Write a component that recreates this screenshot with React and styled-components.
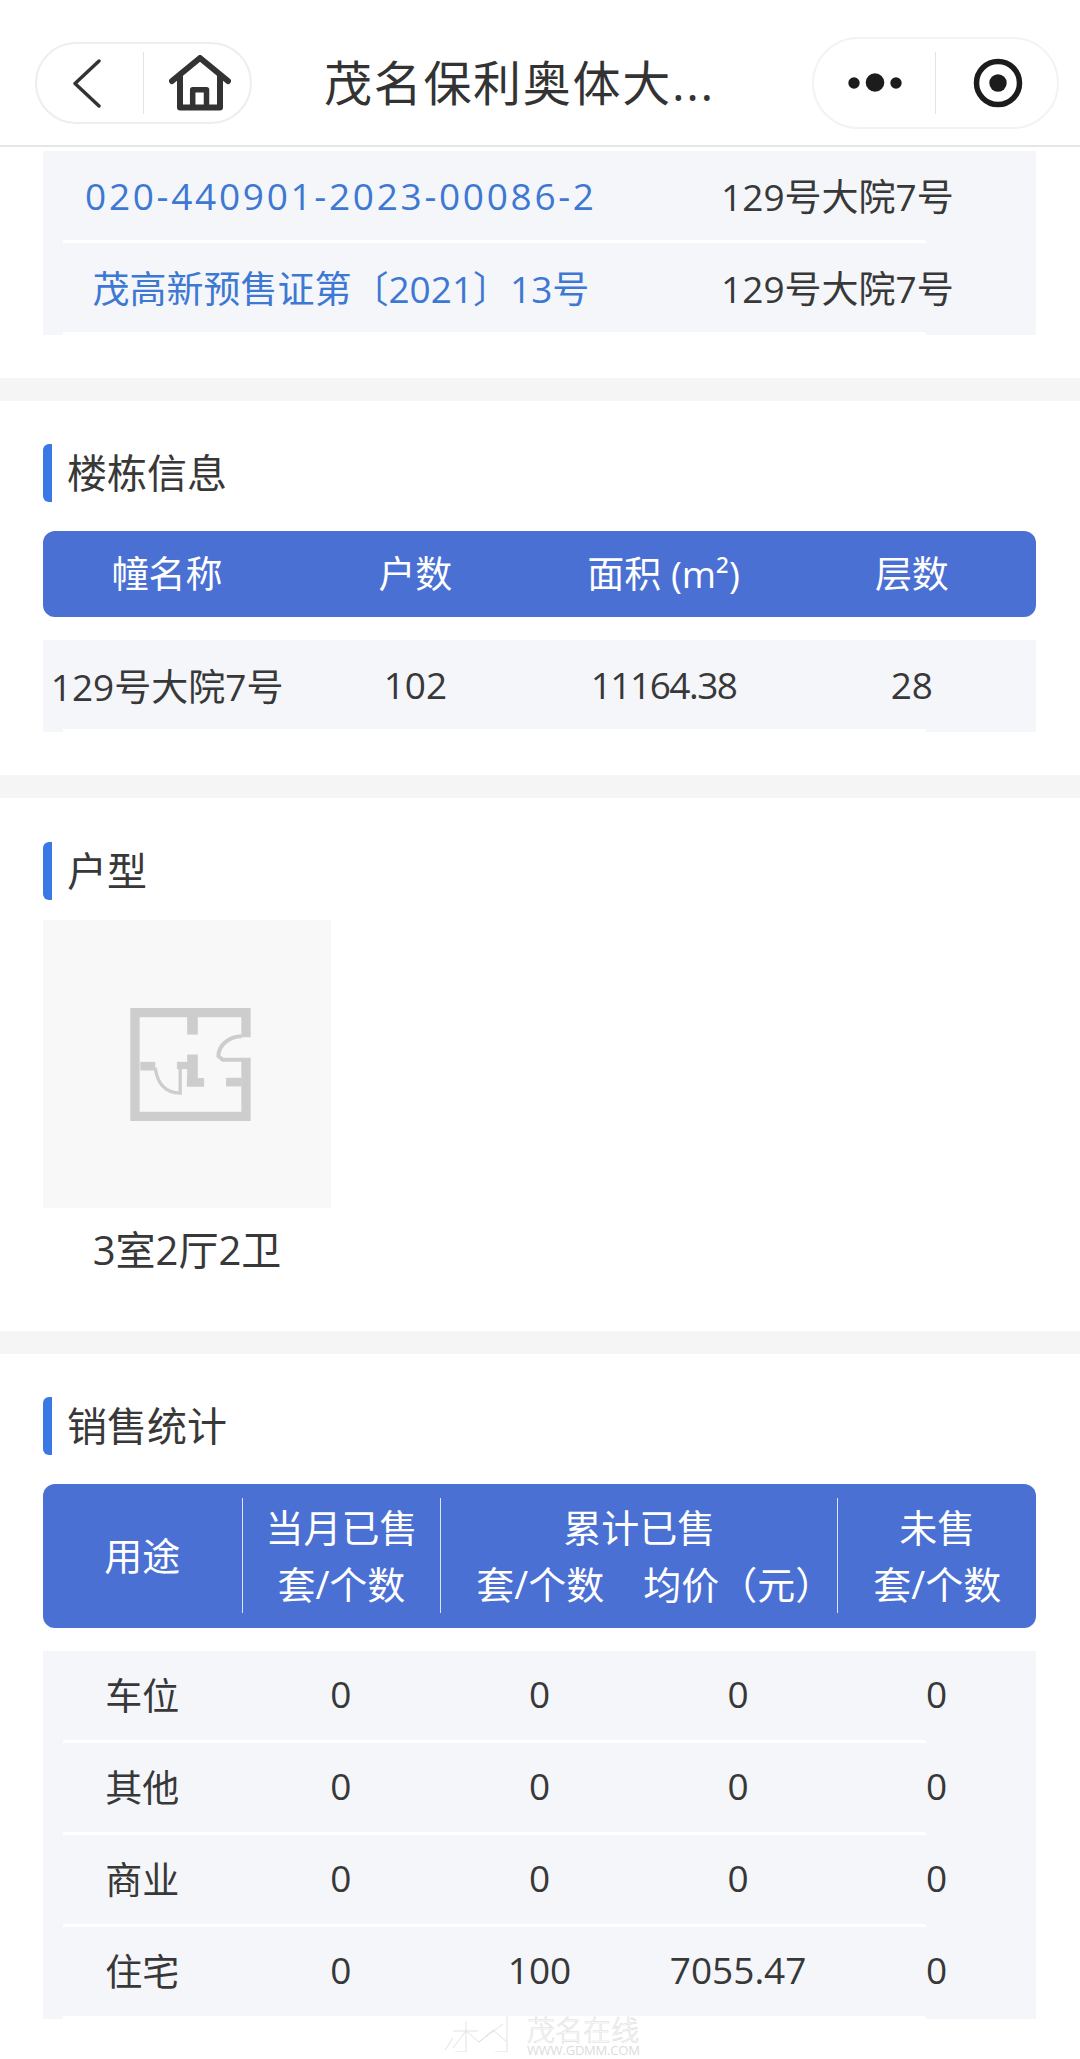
import styled, { createGlobalStyle } from "styled-components";

const GlobalStyle = createGlobalStyle`
  body {
    margin: 0;
    background: #fff;
    font-family: "Open Sans", "Noto Sans CJK SC", sans-serif;
    color: #383838;
  }
`;

const permits = [
  { code: "020-440901-2023-00086-2", spaced: true, name: "129号大院7号" },
  { code: "茂高新预售证第〔2021〕13号", name: "129号大院7号" },
];
const sales = [
  ["车位", "0", "0", "0", "0"],
  ["其他", "0", "0", "0", "0"],
  ["商业", "0", "0", "0", "0"],
  ["住宅", "0", "100", "7055.47", "0"],
];

export default function App() {
  return (
    <Page>
      <GlobalStyle />
      <NavBar>
        <BackCapsule>
          <CapsuleCell $right="6px">
            <svg width="30" height="50" viewBox="0 0 30 50" fill="none" stroke="#333" strokeWidth="3.4" strokeLinecap="round" strokeLinejoin="round">
              <path d="M27 3 L3 25.5 L27 48" />
            </svg>
          </CapsuleCell>
          <CapsuleCell $divided $left="6px">
            <svg width="62" height="56" viewBox="0 0 62 56" fill="none" stroke="#333" strokeWidth="6" strokeLinecap="round" strokeLinejoin="round">
              <path d="M3 26 L31 3 L59 26" />
              <path d="M11 22 V52.5 H51 V22" />
              <path d="M23.7 52 V34.7 H37.5 V52" strokeWidth="5.5" />
            </svg>
          </CapsuleCell>
        </BackCapsule>
        <Title>茂名保利奥体大...</Title>
        <MenuCapsule>
          <CapsuleCell $left="2px">
            <svg width="56" height="20" viewBox="0 0 56 20" fill="#1c1c1c">
              <circle cx="6" cy="10" r="5.7" />
              <circle cx="27" cy="9.5" r="9.3" />
              <circle cx="48" cy="10" r="5.7" />
            </svg>
          </CapsuleCell>
          <CapsuleCell $divided $left="2px">
            <svg width="50" height="50" viewBox="0 0 50 50" fill="none">
              <circle cx="25" cy="25" r="21.5" stroke="#1c1c1c" strokeWidth="5.5" />
              <circle cx="25" cy="25" r="8.7" fill="#1c1c1c" />
            </svg>
          </CapsuleCell>
        </MenuCapsule>
      </NavBar>

      <Section $top="4px" $bottom="43px">
        {permits.map((p) => (
          <Row key={p.code} $cols="6fr 4fr" $lift="4px">
            <LinkText $spaced={p.spaced}>{p.code}</LinkText>
            <span>{p.name}</span>
          </Row>
        ))}
      </Section>

      <Section $bottom="43px">
        <Heading>楼栋信息</Heading>
        <TableHead $cols="repeat(4, 1fr)" $height="86px">
          <span>幢名称</span>
          <span>户数</span>
          <span>面积 (m²)</span>
          <span>层数</span>
        </TableHead>
        <Rows>
          <Row $cols="repeat(4, 1fr)" $lift="3px">
            <span>129号大院7号</span>
            <span>102</span>
            <TightNumber>11164.38</TightNumber>
            <span>28</span>
          </Row>
        </Rows>
      </Section>

      <Section $top="44px" $bottom="0">
        <Heading>户型</Heading>
        <PlanImage>
          <svg width="121" height="113" viewBox="390 380 362 340" fill="none" stroke="#cdcdcd">
            <path d="M738 468 V394 H404 V706 H738 V530" strokeWidth="28" />
            <path d="M577 394 V460" strokeWidth="32" />
            <path d="M725 465 C690 465 655 490 655 525 L668 536 H730" strokeWidth="12" />
            <path d="M420 555 H465" strokeWidth="26" />
            <path d="M465 560 C470 600 490 636 540 636 V560" strokeWidth="10" />
            <path d="M530 553 H590" strokeWidth="22" />
            <path d="M577 520 V610" strokeWidth="32" />
            <path d="M560 604 H612" strokeWidth="26" />
            <path d="M678 603 H725" strokeWidth="26" />
          </svg>
        </PlanImage>
        <PlanLabel>3室2厅2卫</PlanLabel>
      </Section>

      <Section $bottom="0" $last>
        <Heading>销售统计</Heading>
        <SalesHead>
          <HeadCell>用途</HeadCell>
          <HeadCell $divided>
            <span>当月已售</span>
            <span>套/个数</span>
          </HeadCell>
          <HeadCell $divided $wide>
            <span>累计已售</span>
            <HeadPair>
              <span>套/个数</span>
              <span>均价（元）</span>
            </HeadPair>
          </HeadCell>
          <HeadCell $divided>
            <span>未售</span>
            <span>套/个数</span>
          </HeadCell>
        </SalesHead>
        <Rows>
          {sales.map((row) => (
            <Row key={row[0]} $cols="repeat(5, 1fr)" $lift="7px">
              {row.map((v, i) => (
                <span key={i}>{v}</span>
              ))}
            </Row>
          ))}
        </Rows>
      </Section>

      <Watermark>
        <svg width="68" height="36" viewBox="0 0 68 36" fill="none" stroke="#e2e2e2" strokeWidth="1">
          <path d="M2 34 L10 22 M10 15 H35 M23 5 V36 H12 M10 32 L23 15 L36 26 L60 8 M36 26 L50 14 M64 0 V36 H52 M50 14 L64 26" />
        </svg>
        <WatermarkText>
          <WatermarkName>茂名在线</WatermarkName>
          <WatermarkUrl>WWW.GDMM.COM</WatermarkUrl>
        </WatermarkText>
      </Watermark>
    </Page>
  );
}

const Page = styled.div`
  position: relative;
  width: 1080px;
  height: 2059px;
  overflow: hidden;
  background: #fff;
`;

const NavBar = styled.header`
  display: flex;
  align-items: center;
  box-sizing: border-box;
  height: 147px;
  padding: 21px 21px 0 35px;
  border-bottom: 2px solid #e6e6e6;
`;

const Capsule = styled.div`
  display: flex;
  box-sizing: border-box;
  align-items: center;
  border: 2px solid #eeeeee;
  border-radius: 50px;
`;

const BackCapsule = styled(Capsule)`
  width: 217px;
  height: 82px;
`;

const MenuCapsule = styled(Capsule)`
  width: 247px;
  height: 92px;
  border-color: #f3f3f3;
`;

const CapsuleCell = styled.div`
  flex: 1;
  display: flex;
  align-items: center;
  justify-content: center;
  box-sizing: border-box;
  height: 62px;
  padding-left: ${(p) => p.$left || "0"};
  padding-right: ${(p) => p.$right || "0"};
  border-left: ${(p) => (p.$divided ? "1px solid #e4e4e4" : "none")};
`;

const Title = styled.h1`
  flex: 1;
  margin: 0 0 0 72px;
  font-size: 48px;
  font-weight: 400;
  line-height: 60px;
  letter-spacing: 1.7px;
  color: #333;
`;

const Section = styled.section`
  padding: ${(p) => p.$top || "43px"} 44px ${(p) => p.$bottom || "44px"} 43px;
  border-bottom: ${(p) => (p.$last ? "none" : "23px solid #f5f5f5")};
`;

const Heading = styled.h2`
  display: flex;
  align-items: center;
  box-sizing: border-box;
  height: 58px;
  margin: 0;
  padding: 0 0 5px 15px;
  font-size: 40px;
  font-weight: 400;
  color: #383838;
  border-left: 9px solid #3a78e6;
  border-radius: 6px 0 0 6px / 6px;
`;

const TableHead = styled.div`
  display: grid;
  grid-template-columns: ${(p) => p.$cols};
  align-items: center;
  box-sizing: border-box;
  height: ${(p) => p.$height};
  margin-top: 29px;
  padding-bottom: 5px;
  text-align: center;
  font-size: 37px;
  color: #fff;
  background: #4a70d4;
  border-radius: 12px;
`;

const Rows = styled.div`
  margin-top: 23px;
`;

const Row = styled.div`
  position: relative;
  display: grid;
  grid-template-columns: ${(p) => p.$cols};
  align-items: center;
  height: 92px;
  padding-bottom: ${(p) => p.$lift};
  box-sizing: border-box;
  text-align: center;
  font-size: 37px;
  color: #383838;
  background: #f5f6fa;

  &::after {
    content: "";
    position: absolute;
    left: 20px;
    bottom: 0;
    width: 863px;
    height: 3px;
    background: #fff;
  }
`;

const LinkText = styled.span`
  color: #3d78d3;
  letter-spacing: ${(p) => (p.$spaced ? "2.7px" : "0")};
`;

const TightNumber = styled.span`
  letter-spacing: -1.5px;
`;

const PlanImage = styled.div`
  display: flex;
  align-items: center;
  justify-content: center;
  box-sizing: border-box;
  width: 288px;
  height: 288px;
  margin-top: 20px;
  padding-left: 7px;
  background: #f8f8f8;

  svg {
    filter: blur(0.6px);
  }
`;

const PlanLabel = styled.div`
  width: 288px;
  height: 123px;
  padding-top: 13px;
  box-sizing: border-box;
  text-align: center;
  font-size: 40px;
  line-height: 58px;
  color: #383838;
`;

const SalesHead = styled.div`
  display: grid;
  grid-template-columns: repeat(5, 1fr);
  box-sizing: border-box;
  height: 144px;
  margin-top: 29px;
  padding: 14px 0 15px;
  font-size: 38px;
  line-height: 57px;
  color: #fff;
  background: #4a70d4;
  border-radius: 12px;
`;

const HeadCell = styled.div`
  display: flex;
  flex-direction: column;
  align-items: center;
  justify-content: center;
  grid-column: span ${(p) => (p.$wide ? 2 : 1)};
  border-left: ${(p) => (p.$divided ? "1px solid #dfe5f6" : "none")};
`;

const HeadPair = styled.div`
  display: grid;
  grid-template-columns: 1fr 1fr;
  width: 100%;
  text-align: center;
`;

const Watermark = styled.div`
  position: absolute;
  left: 443px;
  top: 2016px;
  display: flex;
  gap: 16px;
`;

const WatermarkText = styled.div`
  display: flex;
  flex-direction: column;
  width: 114px;
`;

const WatermarkName = styled.span`
  font-size: 28px;
  font-weight: 300;
  line-height: 28px;
  color: transparent;
  -webkit-text-stroke: 0.6px #dedede;
`;

const WatermarkUrl = styled.span`
  font-size: 13px;
  line-height: 13px;
  letter-spacing: -0.2px;
  color: #dcdcdc;
  white-space: nowrap;
`;
